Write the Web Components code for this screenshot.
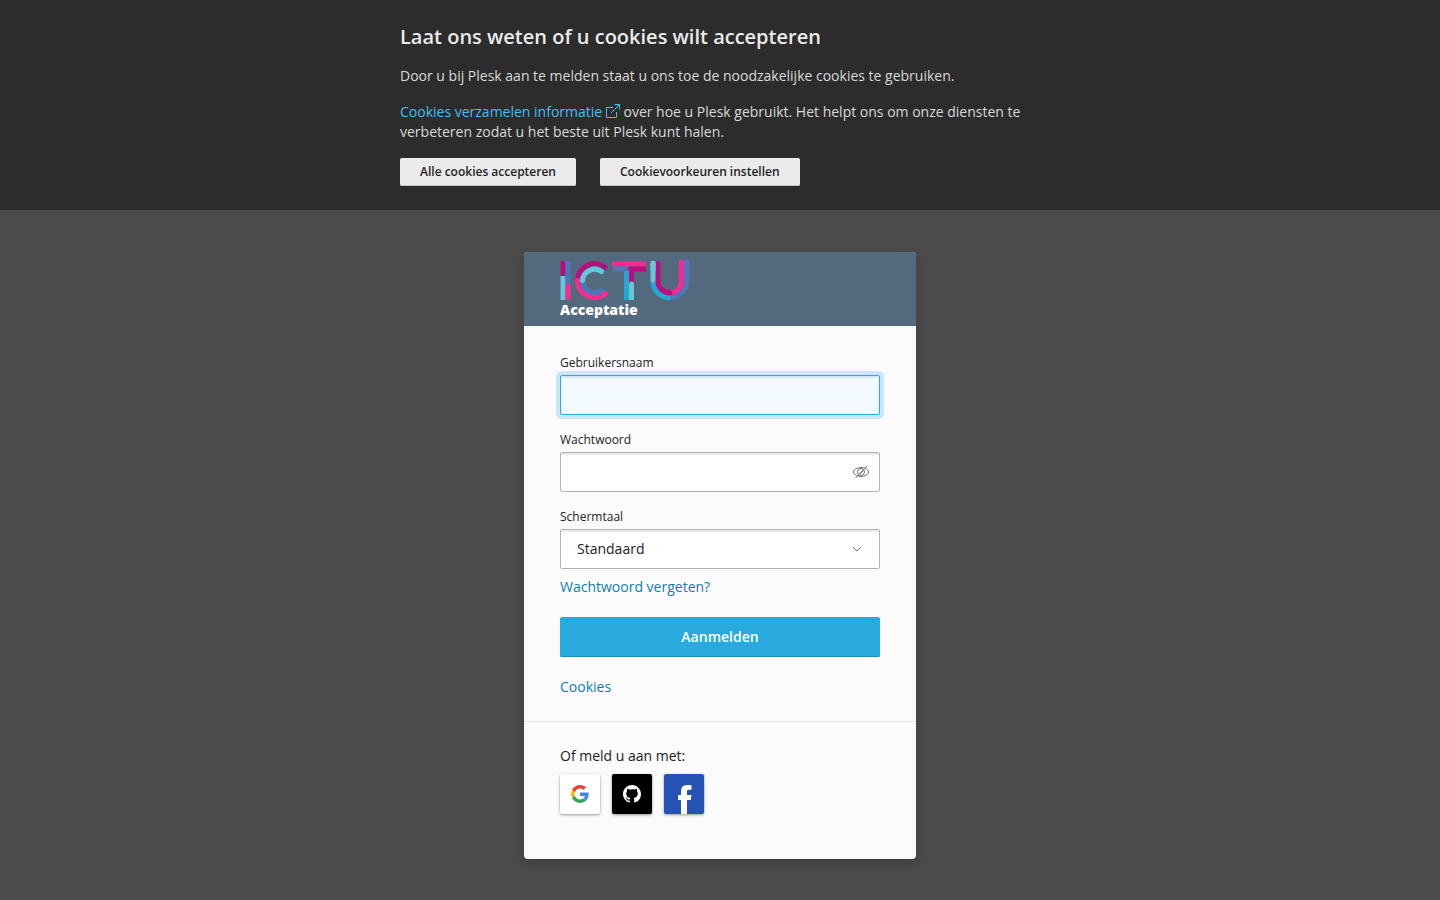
<!DOCTYPE html>
<html lang="nl">
<head>
<meta charset="utf-8">
<meta name="viewport" content="width=device-width, initial-scale=1">
<title>Plesk – Aanmelden</title>
<style>
  html { height: 100%; }
  body { margin: 0; min-height: 100%; display: flex; background: #4b4b4b; color: #222; font: 14px/20px "Open Sans", "Noto Sans", sans-serif; }
  login-page { flex: 1; }
</style>
</head>
<body>
<login-page></login-page>
<script>
const define = (name, html, setup) => customElements.define(name, class extends HTMLElement {
  constructor() {
    super();
    const template = document.createElement('template');
    template.innerHTML = html;
    this.attachShadow({ mode: 'open' }).append(template.content.cloneNode(true));
  }
  connectedCallback() { if (setup) setup(this, this.shadowRoot); }
});

define('cookie-button', `
  <style>
    :host { display: block; }
    button { display: block; margin: 0; padding: 4px 20px; border: 0; border-radius: 2px; background: #ebebeb; box-shadow: inset 0 -1px #c4c4c4; color: #222; font: 600 12px/20px "Open Sans", sans-serif; cursor: pointer; }
  </style>
  <button type="button"><slot></slot></button>`);

define('cookie-banner', `
  <style>
    :host { display: block; background: #2c2c2c; color: #ebebeb; padding: 24px; }
    section { max-width: 640px; margin: 0 auto; }
    h2 { margin: 0 0 16px; font-size: 20px; line-height: 26px; font-weight: 600; }
    p { margin: 0 0 16px; color: #d9d9d9; }
    a { color: #48bdee; text-decoration: none; }
    svg { width: 14px; height: 14px; vertical-align: -1px; }
    div { display: flex; flex-wrap: wrap; gap: 24px; }
  </style>
  <section>
    <h2>Laat ons weten of u cookies wilt accepteren</h2>
    <p>Door u bij Plesk aan te melden staat u ons toe de noodzakelijke cookies te gebruiken.</p>
    <p><a href="#info">Cookies verzamelen informatie <svg viewBox="0 0 14 14" fill="none" stroke="currentColor" aria-hidden="true"><path d="M7 3.500H.5v10h10V8M8.500.5h5v5M13.500.5 5 9"/></svg></a> over hoe u Plesk gebruikt. Het helpt ons om onze diensten te verbeteren zodat u het beste uit Plesk kunt halen.</p>
    <div>
      <cookie-button>Alle cookies accepteren</cookie-button>
      <cookie-button>Cookievoorkeuren instellen</cookie-button>
    </div>
  </section>`);

define('brand-logo', `
  <style>
    :host { display: block; }
    svg { display: block; width: 130px; height: 66px; }
    text { font: 800 14px "Open Sans", sans-serif; }
  </style>
  <svg viewBox="0 0 130 66" fill="none" role="img" aria-label="ICTU Acceptatie">
    <g stroke-width="5">
      <path stroke="#b90e80" d="M3 5v15"/><path stroke="#67c5dc" d="M3 20v24"/>
      <path stroke="#4f76b8" d="M8 5v23"/><path stroke="#f92a91" stroke-linecap="round" d="M8 30v10"/><path stroke="#f92a91" d="M8 38v6"/>
      <path stroke="#b90e80" d="M17.500 24.500A17 17 0 0 1 46.500 12.500"/>
      <path stroke="#f92a91" stroke-linecap="round" d="M17.500 24.500A17 17 0 0 0 45.500 37.500"/>
      <path stroke="#4f76b8" d="M22.500 24.500A12 12 0 0 0 43 33"/>
      <path stroke="#67c5dc" stroke-linecap="round" d="M22.500 24.500A12 12 0 0 1 41.500 15.500"/>
      <path stroke="#f92a91" d="M52 8h34"/><path stroke="#4f76b8" d="M53 13h14"/>
      <path stroke="#b90e80" d="M69 13h17M71.500 13v15"/>
      <path stroke="#23a9d1" d="M66.500 15v29"/>
      <path stroke="#67c5dc" stroke-linecap="round" d="M71.500 28v12"/><path stroke="#67c5dc" d="M71.500 38v6"/>
      <path stroke="#4f76b8" stroke-linecap="round" d="M126.500 6v19A16.750 16.750 0 0 1 109.750 41.750"/>
      <path stroke="#23a9d1" d="M93 24v1A16.750 16.750 0 0 0 110.500 41.750"/>
      <path stroke="#b90e80" d="M98 5v20A11.750 11.750 0 0 0 110 36.750"/>
      <path stroke="#f92a91" d="M121.500 20v5A11.750 11.750 0 0 1 110 36.750"/>
      <path stroke="#f92a91" stroke-linecap="round" d="M121.500 6v17"/>
      <path stroke="#b90e80" stroke-linecap="round" d="M107 36.300l3 .4"/>
      <path stroke="#67c5dc" stroke-linecap="round" d="M93 8v16"/><path stroke="#67c5dc" d="M93 5v10"/>
    </g>
    <text x="0" y="59" fill="#fff">Acceptatie</text>
  </svg>`);

define('form-field', `
  <style>
    :host { display: block; margin-bottom: 16px; }
    label { display: block; margin-bottom: 3px; font-size: 12px; line-height: 18px; }
    .box { display: grid; align-items: center; }
    input, select { grid-area: 1 / 1; box-sizing: border-box; width: 100%; height: 40px; margin: 0; padding: 0 16px; border: 1px solid #b2b2b2; border-radius: 2px; background: #fff; box-shadow: inset 0 2px #ebebeb; color: #222; font: 14px/20px "Open Sans", sans-serif; appearance: none; outline: 0; }
    :host([active]) input { border-color: #28aade; background: #f2f9ff; box-shadow: inset 0 2px #d2eaf8, 0 0 0 4px #c9e7fc; }
    button, .mark { grid-area: 1 / 1; justify-self: end; display: flex; padding: 0; margin: 0 11px 0 0; border: 0; background: none; color: #737373; }
    .mark { margin-right: 15px; pointer-events: none; }
    svg { width: 16px; height: 16px; overflow: visible; fill: none; stroke: currentColor; }
  </style>
  <label for="control"></label>
  <div class="box"></div>`, (host, root) => {
  root.querySelector('label').textContent = host.getAttribute('label');
  const type = host.getAttribute('type');
  root.querySelector('.box').innerHTML = type === 'select'
    ? `<select id="control"><option>Standaard</option></select>
       <span class="mark"><svg viewBox="0 0 16 16" aria-hidden="true"><path d="m4 6 4 4 4-4"/></svg></span>`
    : `<input id="control" type="${type}">` + (type === 'password'
      ? `<button type="button" aria-label="Wachtwoord tonen"><svg viewBox="0 0 16 16" aria-hidden="true"><path d="M0 8C2.500 2 13.500 2 16 8 13.500 14 2.500 14 0 8zM14 2 2.500 14"/><circle cx="8" cy="8" r="3.500"/><path d="m7 10 3-3"/></svg></button>`
      : '');
});

define('social-button', `
  <style>
    :host { display: block; }
    button { display: grid; place-items: center; width: 40px; height: 40px; margin: 0; padding: 0; border: 0; border-radius: 2px; background: var(--fill); box-shadow: 0 1px 3px #0006; cursor: pointer; }
  </style>
  <button type="button"><slot></slot></button>`, (host, root) => {
  root.querySelector('button').setAttribute('aria-label', host.getAttribute('name'));
});

define('login-card', `
  <style>
    :host { display: block; box-sizing: border-box; width: 100%; max-width: 392px; border-radius: 4px; overflow: hidden; background: #fbfbfb; box-shadow: 0 4px 12px #0003; }
    header { padding: 4px 36px; background: #536a7e; }
    form { padding: 28px 36px 24px; }
    a { color: #0d7fb5; text-decoration: none; }
    form > a { display: block; }
    .forgot { margin-top: -8px; }
    .submit { display: block; width: 100%; height: 40px; margin: 20px 0; padding: 0; border: 0; border-radius: 2px; background: #28aade; box-shadow: inset 0 -1px #1b8cba; color: #fff; font: 600 14px/20px "Open Sans", sans-serif; cursor: pointer; }
    footer { padding: 24px 36px 45px; border-top: 1px solid #e8e8e8; }
    p { margin: 0 0 8px; }
    .social { display: flex; gap: 12px; }
    svg { display: block; }
  </style>
  <header><brand-logo></brand-logo></header>
  <form>
    <form-field label="Gebruikersnaam" type="text" active></form-field>
    <form-field label="Wachtwoord" type="password"></form-field>
    <form-field label="Schermtaal" type="select"></form-field>
    <a class="forgot" href="#forgot">Wachtwoord vergeten?</a>
    <button class="submit" type="button">Aanmelden</button>
    <a href="#cookies">Cookies</a>
  </form>
  <footer>
    <p>Of meld u aan met:</p>
    <div class="social">
      <social-button name="Google" style="--fill:#fff"><svg width="18" height="18" viewBox="0 0 48 48"><path fill="#EA4335" d="M24 9.500c3.540 0 6.710 1.220 9.210 3.600l6.850-6.850C35.900 2.380 30.470 0 24 0 14.620 0 6.510 5.380 2.560 13.220l7.980 6.190C12.430 13.720 17.740 9.500 24 9.500z"/><path fill="#4285F4" d="M46.980 24.550c0-1.570-.15-3.090-.38-4.550H24v9.020h12.940c-.58 2.960-2.260 5.480-4.780 7.180l7.730 6c4.510-4.180 7.090-10.360 7.090-17.650z"/><path fill="#FBBC05" d="M10.530 28.590A14.500 14.500 0 0 1 9.770 24c0-1.600.27-3.140.76-4.590l-7.980-6.190A24 24 0 0 0 0 24c0 3.880.92 7.540 2.560 10.780z"/><path fill="#34A853" d="M24 48c6.480 0 11.930-2.130 15.890-5.810l-7.730-6c-2.150 1.450-4.920 2.300-8.160 2.300-6.260 0-11.570-4.220-13.470-9.910l-7.980 6.190C6.510 42.620 14.620 48 24 48z"/></svg></social-button>
      <social-button name="GitHub" style="--fill:#000"><svg width="18" height="18" viewBox="0 0 16 16"><path fill="#fff" d="M8 0C3.580 0 0 3.580 0 8c0 3.540 2.290 6.530 5.470 7.590.4.070.55-.17.55-.38 0-.19-.01-.82-.01-1.490-2.010.37-2.530-.49-2.690-.94-.09-.23-.48-.94-.82-1.130-.28-.15-.68-.52-.01-.53.63-.01 1.080.58 1.230.82.72 1.210 1.870.87 2.330.66.070-.52.280-.87.510-1.070-1.780-.2-3.640-.89-3.640-3.950 0-.87.310-1.590.82-2.150-.08-.2-.36-1.020.08-2.120 0 0 .67-.21 2.200.82A7.600 7.600 0 0 1 8 3.860c.68 0 1.360.09 2 .27 1.530-1.040 2.200-.82 2.200-.82.44 1.100.16 1.920.08 2.120.51.56.82 1.270.82 2.150 0 3.070-1.870 3.750-3.650 3.950.29.25.54.73.54 1.480 0 1.070-.01 1.930-.01 2.200 0 .21.150.46.550.38A8 8 0 0 0 16 8c0-4.420-3.580-8-8-8z"/></svg></social-button>
      <social-button name="Facebook" style="--fill:#2553b4"><svg width="40" height="40" viewBox="0 0 40 40"><path fill="#fff" d="M17 40V26h-3v-5h3v-3.500c0-4.500 2.500-6.500 6.300-6.500 1.700 0 3.700.2 4.200.3v4.500h-2.700c-1.600 0-1.800.9-1.800 2.200v3h4.500l-.7 5H23v14z"/></svg></social-button>
    </div>
  </footer>`);

define('login-page', `
  <style>
    :host { display: block; }
    main { display: flex; justify-content: center; padding: 42px 16px 41px; }
  </style>
  <cookie-banner></cookie-banner>
  <main><login-card></login-card></main>`);
</script>
</body>
</html>
